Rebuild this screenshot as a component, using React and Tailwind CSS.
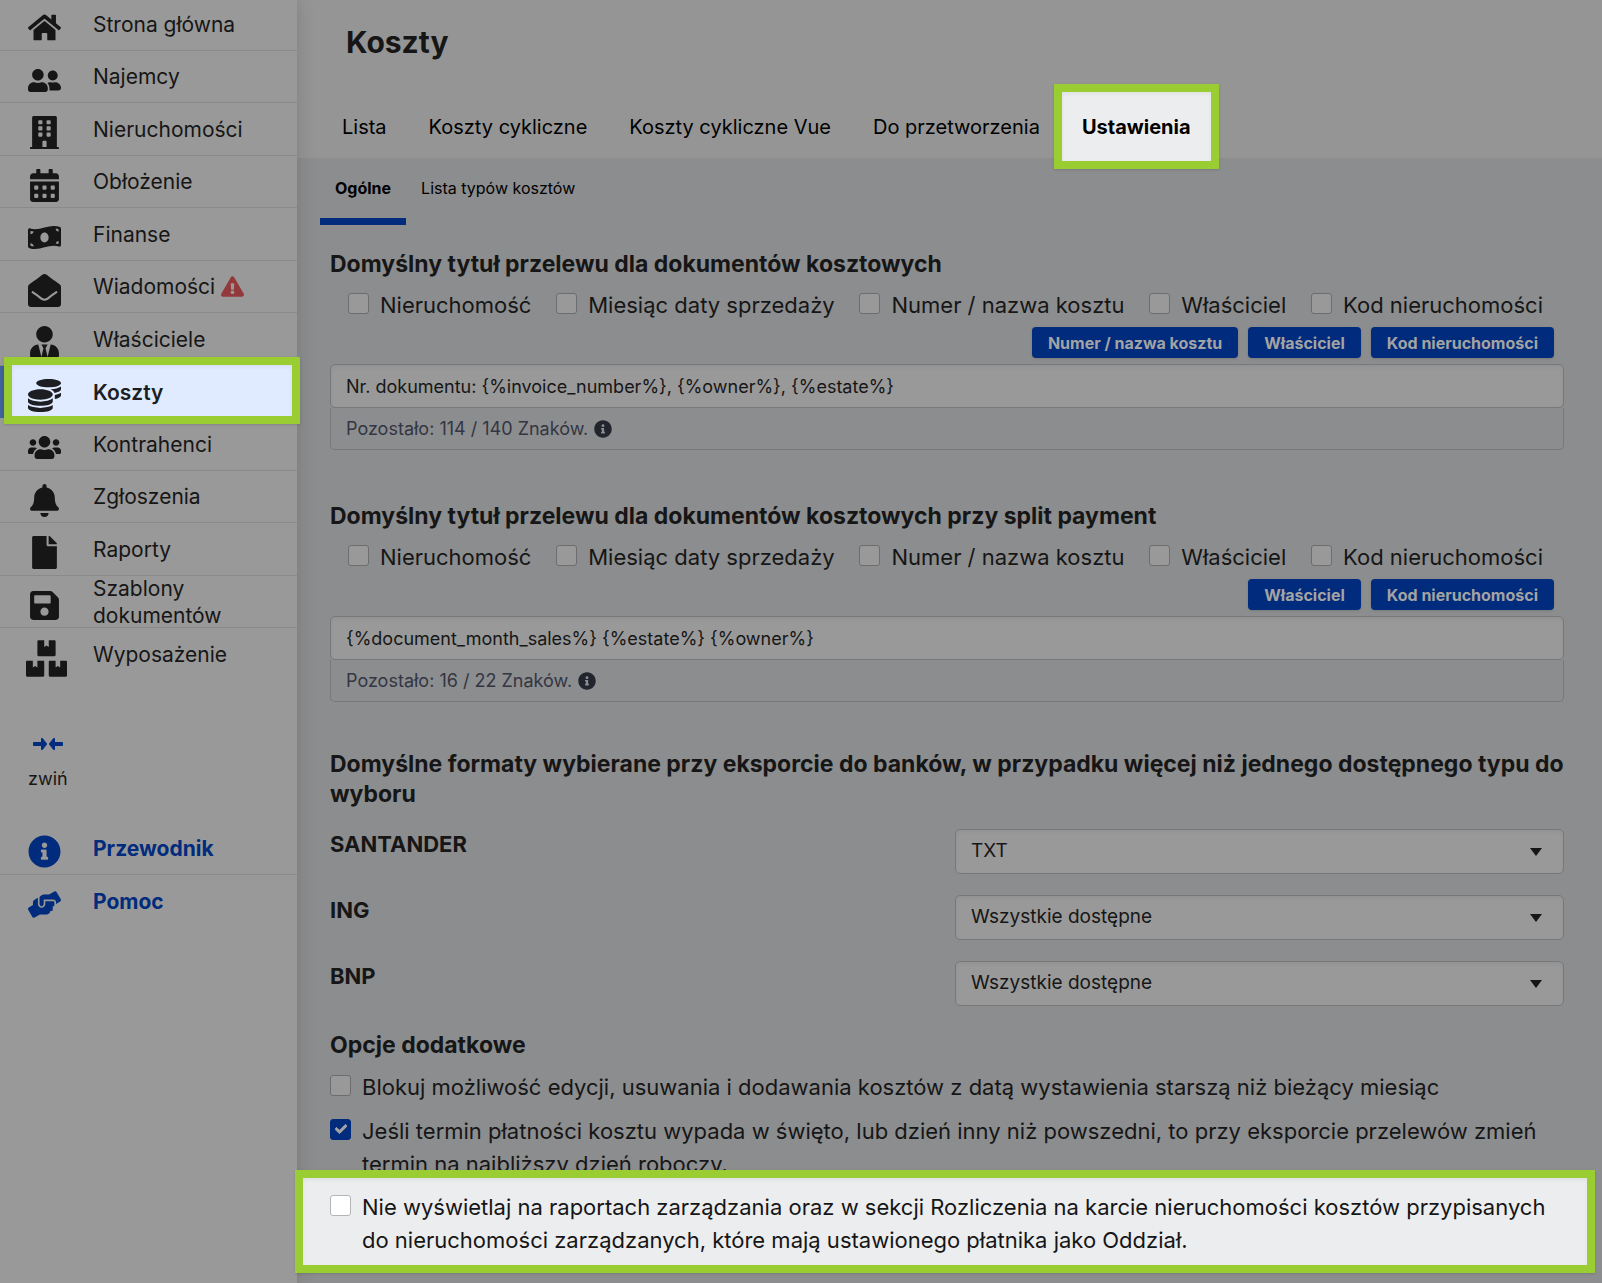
import { useState } from "react";
import {
  FaHome,
  FaUserFriends,
  FaBuilding,
  FaCalendarAlt,
  FaMoneyBillWave,
  FaEnvelopeOpen,
  FaUserTie,
  FaCoins,
  FaUsers,
  FaBell,
  FaFile,
  FaSave,
  FaBoxes,
  FaInfoCircle,
  FaHandsHelping,
  FaExclamationTriangle,
  FaCheck,
} from "react-icons/fa";

const menu = [
  { label: "Strona główna", Icon: FaHome },
  { label: "Najemcy", Icon: FaUserFriends },
  { label: "Nieruchomości", Icon: FaBuilding },
  { label: "Obłożenie", Icon: FaCalendarAlt },
  { label: "Finanse", Icon: FaMoneyBillWave },
  { label: "Wiadomości", Icon: FaEnvelopeOpen, warning: true },
  { label: "Właściciele", Icon: FaUserTie },
  { label: "Koszty", Icon: FaCoins, active: true },
  { label: "Kontrahenci", Icon: FaUsers },
  { label: "Zgłoszenia", Icon: FaBell },
  { label: "Raporty", Icon: FaFile },
  { label: "Szablony dokumentów", Icon: FaSave },
  { label: "Wyposażenie", Icon: FaBoxes, wide: true },
];

const tabs = ["Lista", "Koszty cykliczne", "Koszty cykliczne Vue", "Do przetworzenia"];

const titleParts = [
  "Nieruchomość",
  "Miesiąc daty sprzedaży",
  "Numer / nazwa kosztu",
  "Właściciel",
  "Kod nieruchomości",
];

const banks = [
  { name: "SANTANDER", value: "TXT" },
  { name: "ING", value: "Wszystkie dostępne" },
  { name: "BNP", value: "Wszystkie dostępne" },
];

const Checkbox = ({ id, defaultChecked = false, light = false }) => {
  const [checked, setChecked] = useState(defaultChecked);
  return (
    <span className="relative block size-[21px] shrink-0">
      <input
        id={id}
        type="checkbox"
        checked={checked}
        onChange={(e) => setChecked(e.target.checked)}
        className={`block size-[21px] appearance-none rounded-[3px] border checked:border-[#012b7c] checked:bg-[#012b7c] ${light ? "border-[#b4b5b7] bg-white" : "border-[#6c6d6f] bg-[#999999]"}`}
      />
      {checked && (
        <FaCheck className="pointer-events-none absolute top-1 left-[5px] size-3 stroke-[#a3a3a3] stroke-[40] text-[#a3a3a3]" />
      )}
    </span>
  );
};

const MenuItem = ({ label, Icon, warning, active, wide }) => (
  <li
    className={`relative odd:h-[53px] even:h-[52px] ${active ? "border-l-4 border-[#41619d]" : "border-b border-[#8a8a8a] last:border-b-0"}`}
  >
    {active && (
      <span className="absolute -top-[9px] -right-[3px] -bottom-[6px] left-0 border-8 border-[#9acd32] bg-[#e0ebff] shadow-sm inset-shadow-sm" />
    )}
    <a
      href="#"
      className={`relative flex h-full items-center ${active ? "pl-[22px] font-semibold text-[#1c1e22]" : "pl-[26px]"}`}
    >
      <span className="flex w-[67px] shrink-0 pt-[7px]">
        <Icon className={wide ? "size-[41px]" : "mx-0.5 size-[33px]"} />
      </span>
      <span className="max-w-[160px] text-[21px] leading-[27px]">{label}</span>
      {warning && <FaExclamationTriangle className="ml-1.5 size-[23px] text-[#94393b]" />}
    </a>
  </li>
);

const TransferTitle = ({ id, title, buttons, value, left }) => (
  <section>
    <h2 className="text-[23px] leading-[30px] font-bold">{title}</h2>
    <div className="mt-2.5 mr-[21px] ml-[18px] flex justify-between">
      {titleParts.map((part, i) => (
        <div key={part} className="flex gap-[11px]">
          <span className="pt-1">
            <Checkbox id={`${id}-${i}`} />
          </span>
          <label htmlFor={`${id}-${i}`} className="text-[22px] leading-[33px]">
            {part}
          </label>
        </div>
      ))}
    </div>
    <div className="mt-[5px] mr-2.5 flex justify-end gap-2.5">
      {buttons.map((b) => (
        <button
          key={b}
          className="h-[31px] rounded-[4px] bg-[#012b7c] px-4 text-[16px] font-bold text-[#a3a3a3] shadow-sm"
        >
          {b}
        </button>
      ))}
    </div>
    <div className="mt-1.5">
      <input
        type="text"
        aria-label={title}
        defaultValue={value}
        className="block h-11 w-full rounded-[5px] border border-[#77787a] bg-[#999999] px-[15px] text-[18px] inset-shadow-sm"
      />
      <p className="flex h-[42px] items-center gap-1.5 rounded-b-[5px] border border-t-0 border-[#77787a] px-[15px] text-[18px] text-[#333642]">
        {left}
        <FaInfoCircle className="size-[18px] text-[#22242e]" />
      </p>
    </div>
  </section>
);

const App = () => {
  return (
    <div className="flex min-h-screen overflow-hidden bg-[#8c8d8f] font-['Inter','Noto_Sans',sans-serif] text-[#161616]">
      {/* Menu boczne */}
      <aside className="relative z-10 w-[297px] shrink-0 bg-[#999999] shadow-[0_0_18px_rgba(0,0,0,0.15)]">
        <ul className="-mt-0.5">
          {menu.map((item) => (
            <MenuItem key={item.label} {...item} />
          ))}
        </ul>
        <button className="mt-[57px] ml-7 flex flex-col items-start gap-[15px] text-[18px] leading-[27px]">
          <svg viewBox="0 0 30 12" className="ml-[5px] h-3 w-[30px] fill-[#012b7c]">
            <path d="M1 4h7V1c0-1 1-1.400 1.700-.7l4 5c.4.500.4.900 0 1.400l-4 5C9 12.400 8 12 8 11V8H1C.4 8 0 7.600 0 7V5c0-.6.4-1 1-1z" />
            <path d="M29 4h-7V1c0-1-1-1.400-1.700-.7l-4 5c-.4.500-.4.900 0 1.400l4 5c.7.700 1.700.3 1.700-.7V8h7c.6 0 1-.4 1-1V5c0-.6-.4-1-1-1z" />
          </svg>
          zwiń
        </button>
        <ul className="mt-[30px] font-bold text-[#012b7c]">
          <MenuItem label="Przewodnik" Icon={FaInfoCircle} />
          <MenuItem label="Pomoc" Icon={FaHandsHelping} />
        </ul>
      </aside>

      <div className="min-w-0 flex-1">
        <header className="h-[158px] bg-[#959595]">
          <h1 className="pt-6 pl-[49px] text-[30px] leading-9 font-bold">Koszty</h1>
          <nav className="mt-9 flex h-[61px] items-center gap-[42px] pl-[45px] text-[20px] leading-7 text-black">
            {tabs.map((tab) => (
              <a key={tab} href="#">
                {tab}
              </a>
            ))}
            <a href="#" className="relative z-20 font-bold">
              <span className="absolute -inset-x-[28px] -top-[29px] -bottom-[28px] border-8 border-[#9acd32] bg-[#ecedef] shadow-sm inset-shadow-sm" />
              <span className="relative">Ustawienia</span>
            </a>
          </nav>
        </header>

        <main className="relative z-10 pr-[38px] pl-[33px]">
          <nav className="-ml-2.5 flex text-[16px] leading-5 text-black">
            <a href="#" className="h-[67px] border-b-[7px] border-[#012b7c] px-[15px] pt-5 font-bold">
              Ogólne
            </a>
            <a href="#" className="h-[67px] px-[15px] pt-5">
              Lista typów kosztów
            </a>
          </nav>

          <div className="mt-6 flex flex-col gap-[51px]">
            <TransferTitle
              id="title"
              title="Domyślny tytuł przelewu dla dokumentów kosztowych"
              buttons={["Numer / nazwa kosztu", "Właściciel", "Kod nieruchomości"]}
              value="Nr. dokumentu: {%invoice_number%}, {%owner%}, {%estate%}"
              left="Pozostało: 114 / 140 Znaków."
            />
            <TransferTitle
              id="split"
              title="Domyślny tytuł przelewu dla dokumentów kosztowych przy split payment"
              buttons={["Właściciel", "Kod nieruchomości"]}
              value="{%document_month_sales%} {%estate%} {%owner%}"
              left="Pozostało: 16 / 22 Znaków."
            />
          </div>

          {/* Formaty eksportu do banków */}
          <section className="mt-[47px]">
            <h2 className="-mr-5 text-[23px] leading-[30px] font-bold">
              Domyślne formaty wybierane przy eksporcie do banków, w przypadku więcej niż jednego
              dostępnego typu do wyboru
            </h2>
            <div className="mt-5 flex flex-col gap-[21px]">
              {banks.map((bank) => (
                <div key={bank.name} className="grid h-[45px] grid-cols-[1fr_609px]">
                  <label htmlFor={bank.name} className="text-[22px] leading-[30px] font-bold">
                    {bank.name}
                  </label>
                  <div className="relative">
                    <select
                      id={bank.name}
                      defaultValue={bank.value}
                      className="h-[45px] w-full appearance-none rounded-[5px] border border-[#77787a] bg-[#999999] px-[15px] text-[19px] inset-shadow-sm"
                    >
                      <option>TXT</option>
                      <option>Wszystkie dostępne</option>
                    </select>
                    <svg
                      viewBox="0 0 12 8"
                      className="pointer-events-none absolute top-[19px] right-[22px] h-2 w-3 fill-[#161616]"
                    >
                      <path d="M0 0h12L6 8z" />
                    </svg>
                  </div>
                </div>
              ))}
            </div>
          </section>

          {/* Opcje dodatkowe */}
          <section className="mt-6 text-[22px] leading-[33px]">
            <h2 className="text-[23px] leading-[30px] font-bold">Opcje dodatkowe</h2>
            <div className="mt-[11px] flex gap-[11px]">
              <span className="pt-1">
                <Checkbox id="block" />
              </span>
              <label htmlFor="block">
                Blokuj możliwość edycji, usuwania i dodawania kosztów z datą wystawienia starszą niż
                bieżący miesiąc
              </label>
            </div>
            <div className="mt-[11px] flex gap-[11px]">
              <span className="pt-1">
                <Checkbox id="holiday" defaultChecked />
              </span>
              <label htmlFor="holiday">
                Jeśli termin płatności kosztu wypada w święto, lub dzień inny niż powszedni, to przy
                eksporcie przelewów zmień termin na najbliższy dzień roboczy.
              </label>
            </div>
            <div className="relative mt-2.5 mb-[25px]">
              <span className="absolute -top-[21px] -right-[31px] -bottom-[16px] -left-[35px] border-8 border-[#9acd32] bg-[#ecedef] shadow-sm inset-shadow-sm" />
              <div className="relative flex gap-[11px]">
                <span className="pt-1">
                  <Checkbox id="hide" light />
                </span>
                <label htmlFor="hide">
                  Nie wyświetlaj na raportach zarządzania oraz w sekcji Rozliczenia na karcie
                  nieruchomości kosztów przypisanych do nieruchomości zarządzanych, które mają
                  ustawionego płatnika jako Oddział.
                </label>
              </div>
            </div>
          </section>
        </main>
      </div>
    </div>
  );
};

export default App;
